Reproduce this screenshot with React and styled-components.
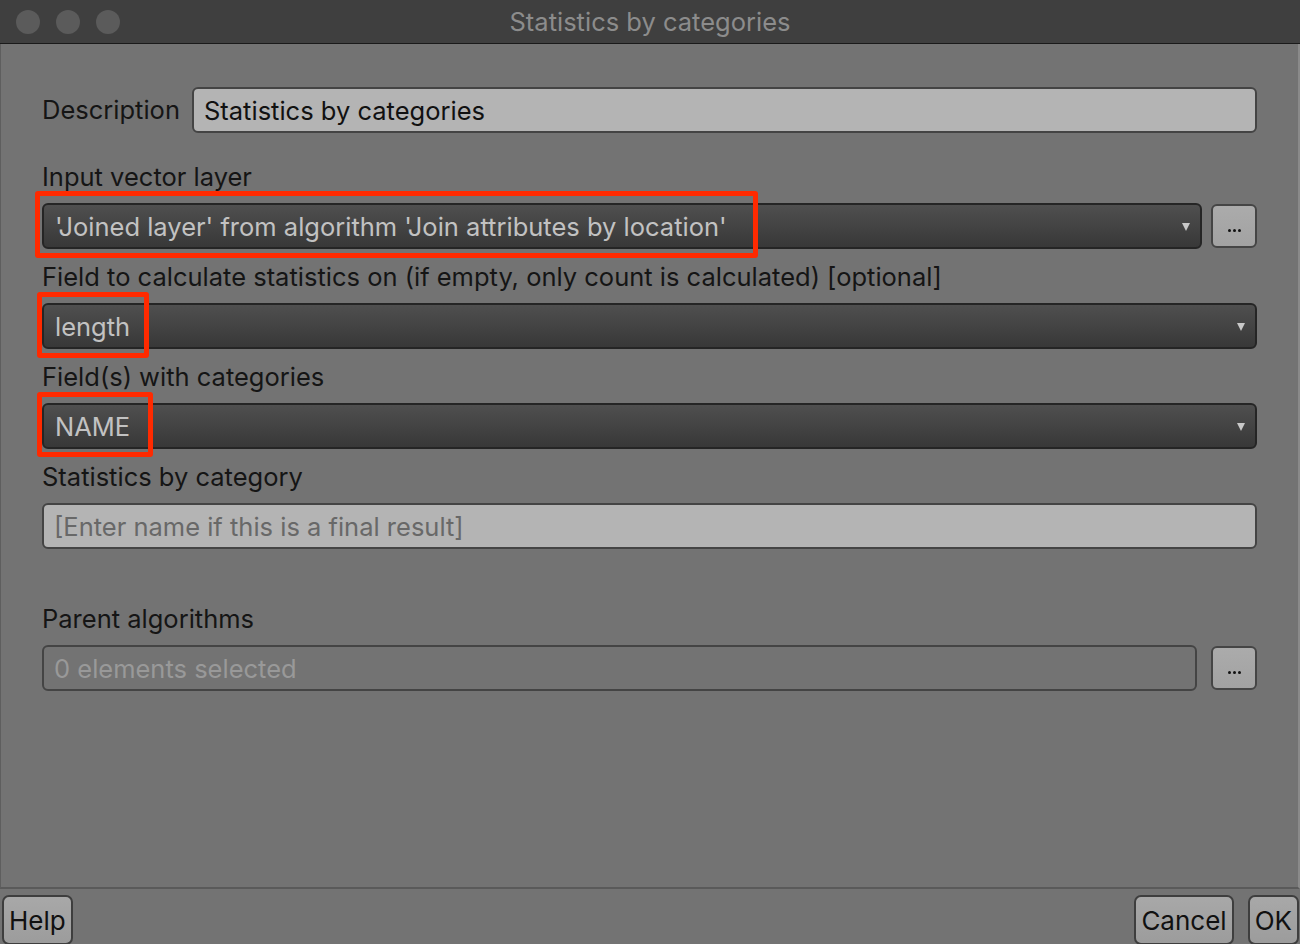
import React from "react";
import styled, { createGlobalStyle } from "styled-components";

const GlobalStyle = createGlobalStyle`
  html, body {
    margin: 0;
    padding: 0;
    background: #3e3e3e;
  }
  body {
    font-family: Inter, "Noto Sans", "Liberation Sans", sans-serif;
  }
`;

const Window = styled.div`
  width: 1300px;
  height: 944px;
  display: flex;
  flex-direction: column;
  overflow: hidden;
  background: #737373;
`;

const TitleBar = styled.div`
  height: 43px;
  flex: none;
  position: relative;
  display: flex;
  align-items: center;
  justify-content: center;
  background: #3f3f3f;
  border-bottom: 1px solid #1a1a1a;
  color: #8c8c8c;
  font-size: 25.5px;
`;

const Lights = styled.div`
  position: absolute;
  left: 16px;
  top: 10px;
  display: flex;
  gap: 16px;
`;

const Light = styled.span`
  width: 24px;
  height: 24px;
  border-radius: 50%;
  background: #5b5b5b;
`;

const Body = styled.div`
  flex: 1;
  padding: 43px 41px 0 41px;
  border-left: 1px solid #5e5e5e;
  border-right: 2px solid #8a8a8a;
  border-bottom: 2px solid #5a5a5a;
  display: flex;
  flex-direction: column;
`;

const Row = styled.div`
  flex: none;
  display: flex;
  align-items: center;
  gap: ${(p) => p.$gap || 9}px;
`;

const Label = styled.div`
  flex: none;
  height: 28px;
  line-height: 28px;
  margin-top: ${(p) => (p.$top === undefined ? 14 : p.$top)}px;
  margin-bottom: ${(p) => (p.$inline ? 0 : 12)}px;
  font-size: 25.5px;
  color: #151515;
  white-space: nowrap;
`;

const LineEdit = styled.div`
  flex: 1;
  height: 42px;
  box-sizing: content-box;
  display: flex;
  align-items: center;
  padding: 0 10px;
  margin-right: ${(p) => p.$mr || 0}px;
  border: 2px solid #444;
  border-radius: 6px;
  background: ${(p) => (p.$clear ? "transparent" : "#b4b4b4")};
  color: ${(p) => p.$color || "#111"};
  font-size: 25.5px;
  white-space: nowrap;
`;

const ComboWrap = styled.div`
  position: relative;
  flex: 1;
  display: flex;
`;

const Combo = styled.div`
  flex: 1;
  height: 42px;
  box-sizing: content-box;
  display: flex;
  align-items: center;
  justify-content: space-between;
  padding: 0 10px 0 11px;
  border: 2px solid #252525;
  border-radius: 6px;
  background: linear-gradient(#4f4f4f, #383838);
  color: #c2c2c2;
  font-size: 25.5px;
  white-space: nowrap;
`;

const Arrow = styled.span`
  width: 0;
  height: 0;
  border-left: 4px solid transparent;
  border-right: 4px solid transparent;
  border-top: 8px solid #c8c8c8;
  margin-top: 2px;
`;

const Highlight = styled.div`
  position: absolute;
  left: ${(p) => p.$left}px;
  top: ${(p) => p.$top}px;
  width: ${(p) => p.$width}px;
  height: ${(p) => p.$height}px;
  box-sizing: border-box;
  border: 5px solid #ff2a00;
  border-radius: 3px;
  pointer-events: none;
`;

const DotsButton = styled.div`
  width: 42px;
  height: 40px;
  flex: none;
  display: flex;
  align-items: center;
  justify-content: center;
  gap: 2px;
  border: 2px solid #454545;
  border-radius: 6px;
  background: linear-gradient(#ababab, #a2a2a2);
`;

const Dot = styled.span`
  width: 3px;
  height: 3px;
  border-radius: 50%;
  background: #111;
  margin-top: 8px;
`;

const Footer = styled.div`
  height: 55px;
  box-sizing: border-box;
  flex: none;
  display: flex;
  align-items: flex-start;
  padding: 6px 1px 0 2px;
  gap: 14px;
  background: #737373;
`;

const Spacer = styled.div`
  flex: 1;
`;

const Button = styled.div`
  height: 46px;
  padding: 0 5px;
  display: flex;
  align-items: center;
  border: 2px solid #3e3e3e;
  border-radius: 7px;
  background: linear-gradient(#a8a8a8, #9c9c9c);
  color: #111;
  font-size: 26px;
`;

function Dots() {
  return (
    <DotsButton>
      <Dot />
      <Dot />
      <Dot />
    </DotsButton>
  );
}

export default function App() {
  return (
    <Window>
      <GlobalStyle />
      <TitleBar>
        <Lights>
          <Light />
          <Light />
          <Light />
        </Lights>
        Statistics by categories
      </TitleBar>
      <Body>
        <Row $gap={12}>
          <Label $top={0} $inline>
            Description
          </Label>
          <LineEdit>Statistics by categories</LineEdit>
        </Row>

        <Label $top={30}>Input vector layer</Label>
        <Row>
          <ComboWrap>
            <Combo>
              'Joined layer' from algorithm 'Join attributes by location'
              <Arrow />
            </Combo>
            <Highlight $left={-7} $top={-12} $width={723} $height={67} />
          </ComboWrap>
          <Dots />
        </Row>

        <Label>Field to calculate statistics on (if empty, only count is calculated) [optional]</Label>
        <Row>
          <ComboWrap>
            <Combo>
              length
              <Arrow />
            </Combo>
            <Highlight $left={-5} $top={-11} $width={112} $height={66} />
          </ComboWrap>
        </Row>

        <Label>Field(s) with categories</Label>
        <Row>
          <ComboWrap>
            <Combo>
              NAME
              <Arrow />
            </Combo>
            <Highlight $left={-5} $top={-11} $width={116} $height={65} />
          </ComboWrap>
        </Row>

        <Label>Statistics by category</Label>
        <Row>
          <LineEdit $color="#686868">[Enter name if this is a final result]</LineEdit>
        </Row>

        <Label $top={56}>Parent algorithms</Label>
        <Row>
          <LineEdit $clear $mr={5} $color="#999">
            0 elements selected
          </LineEdit>
          <Dots />
        </Row>
      </Body>
      <Footer>
        <Button>Help</Button>
        <Spacer />
        <Button>Cancel</Button>
        <Button>OK</Button>
      </Footer>
    </Window>
  );
}
